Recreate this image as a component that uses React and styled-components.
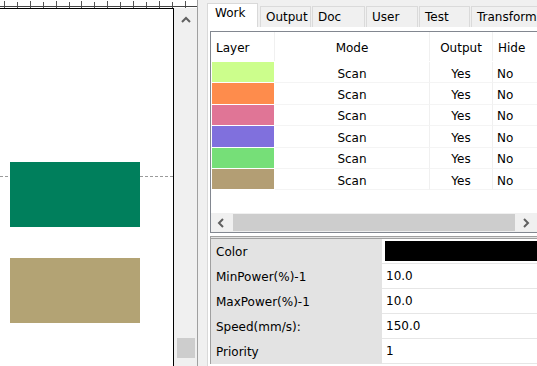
import React from "react";
import styled, { createGlobalStyle } from "styled-components";

const Global = createGlobalStyle`
  html, body { margin: 0; padding: 0; background: #f0f0f0; overflow: hidden; }
  body { font-family: Tahoma, "DejaVu Sans", "Liberation Sans", sans-serif; font-size: 12px; color: #000; }
`;

const Frame = styled.div`
  display: flex;
  width: 537px;
  height: 366px;
  overflow: hidden;
`;

const LeftPane = styled.div`
  width: 197px;
  display: flex;
  flex-direction: column;
  flex-shrink: 0;
`;

const Ruler = styled.svg`
  display: block;
  width: 197px;
  height: 8px;
  background: #fff;
`;

const CanvasRow = styled.div`
  flex: 1;
  display: flex;
`;

const Canvas = styled.div`
  position: relative;
  width: 173px;
  background: #fff;
  border-right: 1px solid #000;
  border-top: 1px solid #000;
`;

const Shape = styled.div`
  position: absolute;
  left: 10px;
  width: 130px;
  height: 65px;
  background: ${(p) => p.$color};
`;

const Guide = styled.div`
  position: absolute;
  left: 0;
  right: 0;
  top: 167px;
  border-top: 1px dashed #9a9a9a;
`;

const VScroll = styled.div`
  width: 23px;
  background: #f0f0f0;
  display: flex;
  flex-direction: column;
  align-items: center;
  justify-content: space-between;
  padding: 8px 0 8px;
  box-sizing: border-box;
`;

const ScrollThumb = styled.div`
  width: 18px;
  height: 20px;
  background: #cdcdcd;
`;

const Splitter = styled.div`
  width: 3px;
  background: #f0f0f0;
  border-left: 1px solid #a0a0a0;
  box-sizing: border-box;
`;

const RightPanel = styled.div`
  flex: 1;
  display: flex;
  flex-direction: column;
  padding: 3px 0 0 7px;
  background: #f0f0f0;
  min-width: 0;
`;

const TabBar = styled.div`
  display: flex;
  height: 24px;
  align-items: flex-end;
  white-space: nowrap;
`;

const Tab = styled.div`
  height: ${(p) => (p.$active ? 24 : 21)}px;
  width: ${(p) => p.$w}px;
  box-sizing: border-box;
  padding: ${(p) => (p.$active ? "2px 0 0 7px" : "3px 0 0 5px")};
  background: ${(p) => (p.$active ? "#fff" : "#f0f0f0")};
  border: 1px solid ${(p) => (p.$active ? "#d9d9d9" : "#dadada")};
  border-bottom: none;
  margin-right: ${(p) => (p.$active ? 2 : 1)}px;
  flex-shrink: 0;
`;

const TabBody = styled.div`
  flex: 1;
  display: flex;
  flex-direction: column;
  background: #fff;
  border-left: 1px solid #d9d9d9;
  padding: 4px 0 0 2px;
`;

const ListView = styled.div`
  height: 200px;
  display: flex;
  flex-direction: column;
  border: 1px solid #828790;
  border-right: none;
  background: #fff;
`;

const ListGrid = styled.div`
  flex: 1;
  display: grid;
  grid-template-columns: 64px 155px 63px 60px;
  grid-auto-rows: 21.4px;
  grid-template-rows: 30px;
  align-content: start;
`;

const HeadCell = styled.div`
  display: flex;
  align-items: center;
  justify-content: ${(p) => (p.$left ? "flex-start" : "center")};
  padding-left: ${(p) => (p.$left ? 5 : 0)}px;
  padding-top: 3px;
  border-right: 1px solid #f0f0f0;
  margin-bottom: 1px;
`;

const Cell = styled.div`
  display: flex;
  align-items: center;
  justify-content: ${(p) => (p.$left ? "flex-start" : "center")};
  padding-left: ${(p) => (p.$left ? 4 : 0)}px;
  border-right: 1px solid #f0f0f0;
  border-bottom: 1px solid #f4f4f4;
  padding-top: 3px;
`;

const Swatch = styled.div`
  margin: 0 1px 1px 1px;
  background: ${(p) => p.$color};
`;

const HScroll = styled.div`
  height: 19px;
  display: flex;
  align-items: center;
  background: #f0f0f0;
  margin-top: auto;
`;

const Arrow = styled.div`
  width: 22px;
  display: flex;
  align-items: center;
  justify-content: center;
`;

const HThumb = styled.div`
  flex: 1;
  height: 17px;
  background: #cdcdcd;
`;

const PropGrid = styled.div`
  margin-top: 3px;
  border-top: 3px double #a0a0a0;
  border-left: 1px solid #a0a0a0;
  display: grid;
  grid-template-columns: 171px 1fr;
  grid-auto-rows: 25px;
  background: #e3e3e3;
`;

const PropLabel = styled.div`
  display: flex;
  align-items: center;
  padding-left: 5px;
  background: #e3e3e3;
`;

const PropValue = styled.div`
  display: flex;
  align-items: center;
  padding-left: 4px;
  background: #fff;
  border-bottom: 1px solid #e6e6e6;
  box-sizing: border-box;
`;

const ColorBar = styled.div`
  height: 20px;
  flex: 1;
  background: #000;
  margin-left: -1px;
`;

const Chevron = ({ dir }) => {
  const d = {
    up: "M1 6 L5 2 L9 6",
    left: "M6 1 L2 5 L6 9",
    right: "M3 1 L7 5 L3 9",
  }[dir];
  return (
    <svg width="10" height="10" viewBox="0 0 10 10">
      <path d={d} fill="none" stroke="#606060" strokeWidth="2" />
    </svg>
  );
};

const layers = ["#ccfe8c", "#fe8c4c", "#e07596", "#8070dd", "#76df78", "#b39e74"];
const props = [
  ["Color", null],
  ["MinPower(%)-1", "10.0"],
  ["MaxPower(%)-1", "10.0"],
  ["Speed(mm/s):", "150.0"],
  ["Priority", "1"],
];
const tabs = [
  ["Work", 51, true],
  ["Output", 51],
  ["Doc", 53],
  ["User", 52],
  ["Test", 51],
  ["Transform", 70],
];

export default function App() {
  const ticks = [];
  for (let x = 4; x < 197; x += 12.9) ticks.push(Math.round(x) + 0.5);
  return (
    <Frame>
      <Global />
      <LeftPane>
        <Ruler viewBox="0 0 197 8">
          {ticks.map((x, i) => (
            <line key={i} x1={x} x2={x} y1={i % 2 ? 2 : 1} y2={8} stroke="#555" strokeWidth="1" />
          ))}
          <line x1="0" x2="197" y1="6.5" y2="6.5" stroke="#444" />
        </Ruler>
        <CanvasRow>
          <Canvas>
            <Guide />
            <Shape $color="#007f5c" style={{ top: 153 }} />
            <Shape $color="#b3a374" style={{ top: 249 }} />
          </Canvas>
          <VScroll>
            <Chevron dir="up" />
            <ScrollThumb />
          </VScroll>
        </CanvasRow>
      </LeftPane>
      <Splitter />
      <RightPanel>
        <TabBar>
          {tabs.map(([t, w, a]) => (
            <Tab key={t} $w={w} $active={a}>
              {t}
            </Tab>
          ))}
        </TabBar>
        <TabBody>
          <ListView>
            <ListGrid>
              <HeadCell $left>Layer</HeadCell>
              <HeadCell>Mode</HeadCell>
              <HeadCell>Output</HeadCell>
              <HeadCell $left>Hide</HeadCell>
              {layers.map((c) => (
                <React.Fragment key={c}>
                  <Swatch $color={c} />
                  <Cell>Scan</Cell>
                  <Cell>Yes</Cell>
                  <Cell $left>No</Cell>
                </React.Fragment>
              ))}
            </ListGrid>
            <HScroll>
              <Arrow>
                <Chevron dir="left" />
              </Arrow>
              <HThumb />
              <Arrow>
                <Chevron dir="right" />
              </Arrow>
            </HScroll>
          </ListView>
          <PropGrid>
            {props.map(([l, v]) => (
              <React.Fragment key={l}>
                <PropLabel>{l}</PropLabel>
                <PropValue>{v === null ? <ColorBar /> : v}</PropValue>
              </React.Fragment>
            ))}
          </PropGrid>
        </TabBody>
      </RightPanel>
    </Frame>
  );
}
